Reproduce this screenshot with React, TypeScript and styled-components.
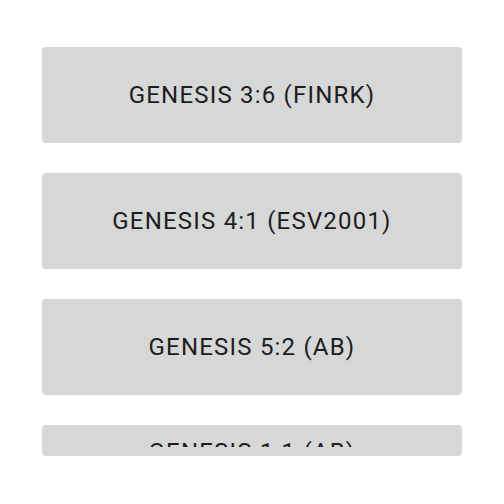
import React from "react";
import styled, { createGlobalStyle } from "styled-components";

const Global = createGlobalStyle`
  html, body { margin: 0; padding: 0; background: #ffffff; }
  body { font-family: Roboto, "Noto Sans", sans-serif; }
`;

const List = styled.div`
  display: flex;
  flex-direction: column;
  gap: 30px;
  width: 420px;
  margin: 0 auto;
  padding: 47px 0 0 0;
`;

const VerseButton = styled.button<{ $collapsed?: boolean }>`
  display: flex;
  align-items: ${(p) => (p.$collapsed ? "flex-start" : "center")};
  justify-content: center;
  width: 420px;
  height: ${(p) => (p.$collapsed ? "31px" : "96px")};
  padding: 0;
  border: none;
  border-radius: 4px;
  background: #d6d7d7;
  color: #1d1d1d;
  font-family: Roboto, "Noto Sans", sans-serif;
  font-size: 24px;
  font-weight: 400;
  letter-spacing: 1.2px;
  overflow: hidden;
  cursor: pointer;
`;

const Label = styled.span`
  display: block;
  line-height: 28px;
  white-space: nowrap;
`;

const Clip = styled.span`
  display: block;
  margin-top: 13px;
  height: 9px;
  overflow: hidden;
`;

const verses = ["GENESIS 3:6 (FINRK)", "GENESIS 4:1 (ESV2001)", "GENESIS 5:2 (AB)"];

export default function App() {
  return (
    <>
      <Global />
      <List>
        {verses.map((v) => (
          <VerseButton key={v}>
            <Label>{v}</Label>
          </VerseButton>
        ))}
        <VerseButton $collapsed>
          <Clip>
            <Label>GENESIS 1:1 (AB)</Label>
          </Clip>
        </VerseButton>
      </List>
    </>
  );
}
